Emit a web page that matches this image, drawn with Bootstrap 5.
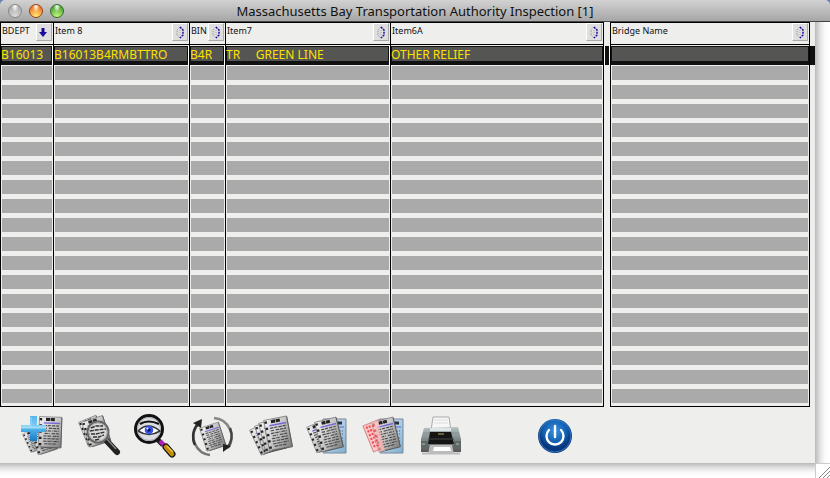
<!DOCTYPE html>
<html lang="en">
<head>
<meta charset="utf-8">
<meta name="viewport" content="width=device-width, initial-scale=1">
<title>Massachusetts Bay Transportation Authority Inspection [1]</title>
<link href="https://cdn.jsdelivr.net/npm/bootstrap@5.3.0/dist/css/bootstrap.min.css" rel="stylesheet">
<style>
body{font-family:"Noto Sans","Open Sans",sans-serif;background:#eeeeec;color:#111;font-size:12px}
.titlebar{height:22px;background:linear-gradient(#d2d2d2,#a6a6a6);border-bottom:1px solid #444;border-radius:5px 5px 0 0}
.backdrop{background:#6a7fae}
.titlebar h1{font:13px/20px "Noto Sans","Open Sans",sans-serif}
.lamps{width:72px;gap:7px;padding-left:8px}
.lamp{width:14px;height:14px;border-radius:50%;border:1px solid #888;background:radial-gradient(ellipse at 50% 12%,#fff 0,#fff9 18%,transparent 38%),radial-gradient(circle at 50% 95%,#ddd,#b0b0b0 70%)}
.lamp.amber{border-color:#94431a;background:radial-gradient(ellipse at 50% 12%,#fff 0,#fff9 18%,transparent 38%),radial-gradient(circle at 50% 95%,#ffee7c,#ef7b2a 75%)}
.lamp.green{border-color:#356c25;background:radial-gradient(ellipse at 50% 12%,#fff 0,#fff9 18%,transparent 38%),radial-gradient(circle at 50% 95%,#c9f783,#50a937 75%)}
.records{table-layout:fixed;width:calc(100% - 5px);border-collapse:separate;border-spacing:0}
.records th,.records td{padding:0;border-left:1px solid #000}
.records .edge{border-right:1px solid #000}
.records th{height:24px;border-top:1px solid #000;font-weight:400;vertical-align:top;background:linear-gradient(#000,#000) 0 21px/100% 1px no-repeat}
.heading{font-size:9px;line-height:16px;padding:0 1px 0 1px;height:23px}
.sorter{width:16px;height:18px;background:#dededf;border:1px solid;border-color:#fff #aaa #aaa #fff}
.records td{height:19px;background:linear-gradient(#aaa,#aaa) 1px 0/calc(100% - 2px) 14px no-repeat}
.records .picked td{height:20px;line-height:18px;white-space:pre;overflow:hidden;color:#ffe000;vertical-align:top;border-right:1px solid #fff;background:linear-gradient(#555553,#555553) 1px 1px/calc(100% - 2px) 14px no-repeat,linear-gradient(#111,#111) 0 0/100% 19px no-repeat}
.records .picked .edge{border-right-color:#000}
.records th.gutter,.records td.gutter{border:0;background:none}
.records .picked .gutter{border:solid #fff;border-width:0 1px;background:linear-gradient(#111,#111) 0 0/100% 19px no-repeat}
.records tr.foot td{height:18px;border-bottom:1px solid #000}
.records tr.foot td.gutter{border:0}
.sheet-end{width:5px;background:linear-gradient(#111,#111) 0 24px/100% 19px no-repeat}
.tools{padding:7px 21px 5px;gap:15px}
.tool{width:42px;height:44px}
.tool svg{overflow:visible}
.power{width:36px;margin-left:60px}
.track-v{width:15px;background:linear-gradient(90deg,#b9b9b9,#e4e4e4 35%,#fafafa 65%,#fff)}
.track-h{height:15px;background:linear-gradient(#b9b9b9,#e4e4e4 35%,#fafafa 65%,#fff)}
.grip{width:15px;height:15px;background:#fff;border:1px solid #ccc;border-width:1px 0 0 1px}
</style>
<script src="https://cdn.jsdelivr.net/npm/bootstrap@5.3.0/dist/js/bootstrap.bundle.min.js"></script>
</head>
<body>
<svg width="0" height="0" class="position-absolute" aria-hidden="true">
<defs>
<linearGradient id="paper" x2="1" y2="1"><stop stop-color="#f6f6f6"/><stop offset=".5" stop-color="#c4c4c4"/><stop offset="1" stop-color="#7c7c7c"/></linearGradient>
<linearGradient id="sky" x2="1" y2="1"><stop stop-color="#dfeafa"/><stop offset="1" stop-color="#7faed0"/></linearGradient>
<linearGradient id="cross" x2="0" y2="1"><stop stop-color="#55b4ec"/><stop offset=".38" stop-color="#7fcaf2"/><stop offset=".46" stop-color="#a4dcf8"/><stop offset=".54" stop-color="#4fb1e8"/><stop offset="1" stop-color="#1879c0"/></linearGradient>
<linearGradient id="machine" x2="0" y2="1"><stop stop-color="#b5c4c4"/><stop offset=".5" stop-color="#7d8888"/><stop offset="1" stop-color="#555"/></linearGradient>
<radialGradient id="glow" cy=".35"><stop stop-color="#3a93dc"/><stop offset=".65" stop-color="#1361b4"/><stop offset="1" stop-color="#07377f"/></radialGradient>
<g id="ink">
<path d="M7 3h9" stroke="#222" stroke-width="3" stroke-dasharray="4 .6"/>
<path d="M5 6.500h16" stroke="#7567d8" stroke-width="1.300"/>
<path d="M5 9h7m1 0h7M5 11.500h4m1 0h10M5 14h9m1 0h5M6 16.500h5m2 0h7M5 19h8m1 0h6M5 21.500h3m1 0h11M5 24h9m1 0h5M6 26.500h12" stroke="#4a4a4a" stroke-width="1.100" stroke-dasharray="3.300 .7"/>
</g>
<g id="holes"><path d="M.8 3h2.400M.8 9h2.400M.8 15h2.400M.8 21h2.400M.8 27h2.400" stroke="#222" stroke-width="2.200"/></g>
<g id="leaf"><path d="M.5.5h22v29h-22z" fill="url(#paper)" stroke="#777" stroke-width=".7"/><path d="M22.500 1v29H3" fill="none" stroke="#555" stroke-width=".8"/><use href="#ink"/><use href="#holes"/></g>
</defs>
</svg>
<div class="d-flex flex-column min-vh-100">
<header class="backdrop"><div class="titlebar d-flex align-items-center">
<div class="lamps d-flex"><span class="lamp"></span><span class="lamp amber"></span><span class="lamp green"></span></div>
<h1 class="flex-fill text-center m-0 text-nowrap">Massachusetts Bay Transportation Authority Inspection [1]</h1><div class="lamps"></div>
</div></header>
<div class="d-flex flex-fill">
<main class="flex-fill">
<div class="d-flex"><table class="records">
<colgroup><col style="width:53px"><col style="width:136px"><col style="width:36px"><col style="width:165px"><col><col style="width:6px"><col style="width:200px"></colgroup>
<thead><tr id="heads"></tr></thead>
<tbody id="rows"><tr class="picked"><td>B16013</td><td>B16013B4RMBTTRO</td><td>B4R</td><td>TR     GREEN LINE</td><td class="edge">OTHER RELIEF</td><td class="gutter"></td><td class="edge"></td></tr></tbody>
</table><div class="sheet-end flex-shrink-0"></div></div>
<div class="tools d-flex">
<button class="tool btn p-0 border-0" aria-label="Add"><svg width="42" height="44" fill="none">
<use href="#leaf" transform="translate(1 20) rotate(-25) scale(.7)"/><use href="#leaf" transform="translate(9 17) rotate(-18) scale(.92 .85)"/>
<use href="#leaf" transform="translate(18 2) rotate(2) scale(1.020 1.040)"/>
<path d="M9 2h7v9h9v7h-9v9H9v-9H0v-7h9z" fill="url(#cross)"/><path d="M1 12h9V3" stroke="#a9dffa" stroke-width=".8"/></svg></button>
<button class="tool btn p-0 border-0" aria-label="Find"><svg width="42" height="44" fill="none">
<use href="#leaf" transform="translate(0 8) rotate(-22) scale(.85 .9)"/><use href="#leaf" transform="translate(3 8) rotate(-18) scale(1 .9)"/>
<path d="m27 25 12 13" stroke="#222" stroke-width="6" stroke-linecap="round"/><path d="m28 24 10 11" stroke="#888" stroke-width="1.500"/>
<circle cx="20" cy="18" r="10.500" fill="#d9d9d9" stroke="#666" stroke-width="2"/><circle cx="20" cy="18" r="9" stroke="#aaa"/>
<path d="m13 14 5-2 7 0M12 17l6-1 10-1M13 20l5 0 9-2M15 23l6 0 5-2M17 26l5-1" stroke="#333" stroke-width="1.400" stroke-dasharray="4 .8"/></svg></button>
<button class="tool btn p-0 border-0" aria-label="View"><svg width="42" height="44" fill="none">
<path d="m23 26 5 5" stroke="#222" stroke-width="5"/><path d="m25 27 6 6" stroke="#b31fb5" stroke-width="4"/>
<path d="m31 33 6 7" stroke="#111" stroke-width="7" stroke-linecap="round"/><path d="m31 33 6 7" stroke="#c58c0c" stroke-width="4.500" stroke-linecap="round"/><path d="m32 32 6 6" stroke="#f2cf48" stroke-width="1.200"/>
<circle cx="14" cy="15" r="13.500" fill="#dcdfe2" stroke="#111" stroke-width="3"/><circle cx="14" cy="15" r="11.500" stroke="#aaa"/>
<path d="M5 10q8-5 19 0" stroke="#111" stroke-width="2.200"/><path d="M3 17q10-10 22 0-11 7-22 0" fill="#fff" stroke="#333" stroke-width="1.500"/><circle cx="14" cy="16" r="4.300" fill="#3555ee"/><circle cx="14" cy="16" r="1.700" fill="#10104a"/><circle cx="12.500" cy="14.500" r="1" fill="#fff"/></svg></button>
<button class="tool btn p-0 border-0" aria-label="Refresh"><svg width="42" height="44" fill="none">
<use href="#leaf" transform="translate(7 14) rotate(-18) scale(.9 .83)"/><path d="M18 41A19 19 0 0 1 5 11" stroke="#777" stroke-width="2.500"/><path d="M3 31A19 19 0 0 1 7 9" stroke="#333" stroke-width="2.500"/><path d="m1 9 9-4-1 9z" fill="#222"/>
<path d="M22 4A19 19 0 0 1 36 34" stroke="#888" stroke-width="2.500"/><path d="M38 14a19 19 0 0 1-3 20" stroke="#444" stroke-width="2.500"/><path d="m31 30 8 2-8 6z" fill="#222"/></svg></button>
<button class="tool btn p-0 border-0" aria-label="Show all"><svg width="42" height="44" fill="none">
<use href="#leaf" transform="translate(0 16) rotate(-25) scale(.9 .95)"/><use href="#leaf" transform="translate(5 12) rotate(-20) scale(.95 1)"/><use href="#leaf" transform="translate(9 9) rotate(-14) scale(.97 1.040)"/><use href="#leaf" transform="translate(14 6) rotate(-11) scale(1.060)"/></svg></button>
<button class="tool btn p-0 border-0" aria-label="Show subset"><svg width="42" height="44" fill="none">
<g transform="translate(17 5)"><path d="M0 0h23v34H0z" fill="url(#sky)" stroke="#789"/><path d="M13 4h6" stroke="#234" stroke-width="3"/><path d="M3 8h18" stroke="#66c"/><path d="M4 12h16M4 15h16M4 19h16M4 22h16" stroke="#567" stroke-width="1.200" stroke-dasharray="4 1"/></g>
<use href="#leaf" transform="translate(0 13) rotate(-22) scale(.88 .95)"/><use href="#leaf" transform="translate(8 8) rotate(-14) scale(1 1.040)"/></svg></button>
<button class="tool btn p-0 border-0" aria-label="Omit subset"><svg width="42" height="44" fill="none">
<g transform="translate(17 5)"><path d="M0 0h23v34H0z" fill="url(#sky)" stroke="#789"/><path d="M13 4h6" stroke="#234" stroke-width="3"/><path d="M3 8h18" stroke="#66c"/><path d="M4 12h16M4 15h16M4 19h16M4 22h16" stroke="#567" stroke-width="1.200" stroke-dasharray="4 1"/></g>
<g transform="translate(0 12) rotate(-22)"><path d="M0 0h18v28H0z" fill="#ffc9c9" stroke="#c88"/><path d="M2 3h6M2 7h6M2 11h6M2 15h6M2 19h6M2 23h6" stroke="#ee4e55" stroke-width="2.200" stroke-dasharray="2 1"/></g>
<use href="#leaf" transform="translate(8 8) rotate(-14) scale(1 1.040)"/><path d="m8 8 7-2 7 31-7 1z" fill="#ffb3b3" fill-opacity=".7"/><path d="m10 11 6 25" stroke="#ee4e55" stroke-width="2" stroke-dasharray="2 3"/></svg></button>
<button class="tool btn p-0 border-0" aria-label="Print"><svg width="42" height="44" fill="none">
<path d="M13 3h16l2 14H11z" fill="#f7f7f7" stroke="#aaa"/><path d="M14 6h14M14 9h14" stroke="#ddd"/>
<path d="m4 14 34-1 3 12v13H1V25z" fill="url(#machine)"/><path d="M10 14h21v3H10z" fill="#dfe5e5"/><path d="M3 18h36v4H3z" fill="#8f9c9b"/>
<path d="m10 18h21l3 12H8z" fill="#151515"/><path d="M18 20h6" stroke="#bcae65"/><path d="M8 25h26" stroke="#444"/>
<path d="M1 27h7v8H1zM34 27h7v8h-7z" fill="#606767"/><path d="M2 30h3M36 30h3" stroke="#bbb"/>
<path d="M10 31h22l2 9H8z" fill="#bbb"/><path d="M14 33h16l1 4H13z" fill="#fff"/><path d="M2 39.500h38" stroke="#bbb" stroke-width="2"/></svg></button>
<button class="tool power btn p-0 border-0" aria-label="Quit"><svg width="36" height="44" fill="none"><circle cx="18" cy="22" r="17" fill="url(#glow)"/><circle cx="18" cy="22" r="16" stroke="#3f83c5" stroke-width=".8"/><path d="M12 16a8.500 8.500 0 1 0 12 0M18 12v11" stroke="#fff" stroke-width="2.400" stroke-linecap="round"/></svg></button>
</div>
</main>
<div class="track-v flex-shrink-0"></div>
</div>
<footer class="d-flex"><div class="track-h flex-fill"></div><div class="grip"><svg class="d-block" width="14" height="14"><path d="M3 14 14 3M7 14l7-7M11 14l3-3" stroke="#888"/></svg></div></footer>
</div>
<script>
const arrow = '<path d="M6 4v5" stroke="#1a0a9a" stroke-width="3"/><path d="M2 8h8l-4 5z" fill="#1a0a9a"/>';
const dial = '<path d="M7 3 4 6v5L7 14" fill="none" stroke="#999" stroke-dasharray="1.500 1"/><path d="M7 3l3 3v5l-3 3" fill="none" stroke="#1a0a9a" stroke-width="1.500" stroke-dasharray="2 1"/><path d="M7 6v5" stroke="#aaa" stroke-dasharray="1 1"/>';
document.getElementById('heads').innerHTML = ['BDEPT','Item 8','BIN','Item7','Item6A',null,'Bridge Name'].map((t, i) =>
  t === null ? '<td class="gutter"></td>' :
  `<th scope="col"${i > 3 ? ' class="edge"' : ''}><div class="heading d-flex justify-content-between text-nowrap"><span>${t}</span><button class="sorter p-0 d-block" aria-label="Sort by ${t}"><svg class="d-block" width="14" height="16">${i ? dial : arrow}</svg></button></div></th>`).join('');
const rows = document.getElementById('rows');
for (let r = 1; r <= 18; r++) {
  const tr = rows.insertRow();
  if (r === 18) tr.className = 'foot';
  for (let c = 0; c < 7; c++) tr.insertCell().className = c === 5 ? 'gutter' : c === 4 || c === 6 ? 'edge' : '';
}
</script>
</body>
</html>
